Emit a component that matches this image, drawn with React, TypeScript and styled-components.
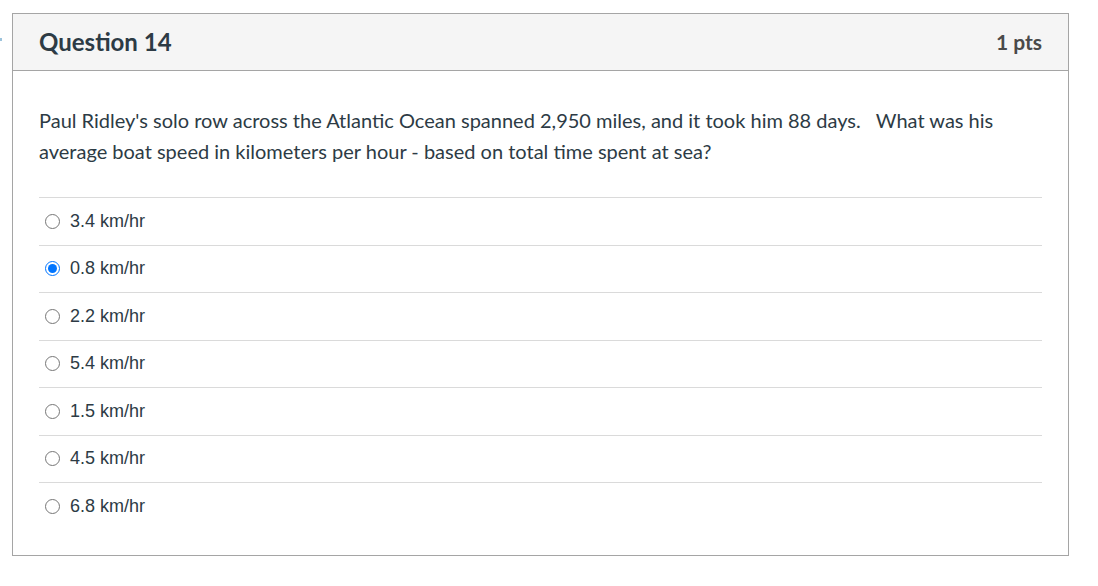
import React, { useState } from 'react';
import styled, { createGlobalStyle } from 'styled-components';

const GlobalStyle = createGlobalStyle`
    html, body {
        margin: 0;
        padding: 0;
        background: #ffffff;
    }
    body {
        font-family: Lato, "Liberation Sans", sans-serif;
        color: #2d3b45;
    }
`;

const Page = styled.div`
    position: relative;
    padding: 13px 29px 30px 12px;
`;

// little leftover dot at the very left edge of the screenshot
const EdgeMark = styled.span`
    position: absolute;
    left: 0;
    top: 38px;
    width: 2px;
    height: 3px;
    background: #9cc3dc;
`;

const Card = styled.div`
    border: 1px solid #a5a5a5;
    width: 1055px;
    box-sizing: content-box;
`;

const Header = styled.div`
    display: flex;
    align-items: center;
    justify-content: space-between;
    height: 56px;
    padding: 0 26px;
    background: #f5f5f5;
    border-bottom: 1px solid #a5a5a5;
`;

const Title = styled.h2`
    margin: -2px 0 0;
    font-family: Lato, sans-serif;
    font-weight: 700;
    font-size: 24px;
    color: #2d3b45;
`;

const Points = styled.div`
    margin-top: -2px;
    font-family: Lato, sans-serif;
    font-weight: 700;
    font-size: 21px;
    color: #4a4a4a;
`;

const Body = styled.div`
    padding: 34px 26px 25px;
`;

const Prompt = styled.p`
    margin: 0 0 30px;
    font-size: 20px;
    line-height: 31px;
    color: #2d3b45;
`;

const Options = styled.div`
    display: flex;
    flex-direction: column;
`;

const Option = styled.label`
    display: flex;
    align-items: center;
    height: 46.5px;
    border-top: 1px solid #dadada;
    padding-left: 6px;
    font-family: "Liberation Sans", Arial, sans-serif;
    font-size: 18px;
    color: #2d3b45;
    cursor: pointer;

    input {
        margin: 0 10px 0 0;
        width: 15px;
        height: 15px;
    }
`;

const answers = ['3.4 km/hr', '0.8 km/hr', '2.2 km/hr', '5.4 km/hr', '1.5 km/hr', '4.5 km/hr', '6.8 km/hr'];

const App = () => {
    const [picked, setPicked] = useState(1);

    return (
        <Page>
            <GlobalStyle />
            <EdgeMark />
            <Card>
                <Header>
                    <Title>Question 14</Title>
                    <Points>1 pts</Points>
                </Header>
                <Body>
                    <Prompt>
                        Paul Ridley's solo row across the Atlantic Ocean spanned 2,950 miles, and it took him 88 days.&nbsp;&nbsp; What was his average boat speed in kilometers per hour - based on total time spent at sea?
                    </Prompt>
                    <Options>
                        {answers.map((a, i) => (
                            <Option key={a}>
                                <input type="radio" name="q14" checked={picked === i} onChange={() => setPicked(i)} />
                                {a}
                            </Option>
                        ))}
                    </Options>
                </Body>
            </Card>
        </Page>
    );
};

export default App;
